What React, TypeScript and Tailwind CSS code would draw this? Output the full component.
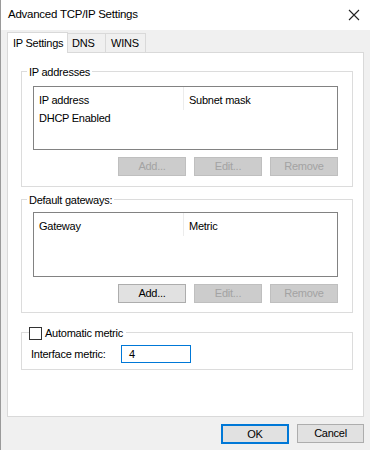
import React from "react";

const font = { fontFamily: '"Liberation Sans", Arial, sans-serif' };

function Btn({ label, disabled, isDefault, w = "w-[68px]" }: { label: string; disabled?: boolean; isDefault?: boolean; w?: string }) {
  if (disabled) {
    return (
      <div className={`${w} h-[19px] flex items-center justify-center bg-[#cccccc] border border-[#bfbfbf] text-[#a3a3a3]`}>
        {label}
      </div>
    );
  }
  if (isDefault) {
    return (
      <div className={`${w} h-[20px] flex items-center justify-center bg-[#e1e1e1] border-2 border-[#0078d7] text-black`}>
        {label}
      </div>
    );
  }
  return (
    <div className={`${w} h-[19px] flex items-center justify-center bg-[#e1e1e1] border border-[#adadad] text-black`}>
      {label}
    </div>
  );
}

function ListBox({ h, col1, col2, rows }: { h: string; col1: string; col2: string; rows: string[] }) {
  return (
    <div className={`ml-[11px] w-[305px] ${h} border border-[#828282] bg-white`}>
      <div className="flex h-[23px]">
        <div className="w-[150px] pl-[5px] pt-[5px] border-r border-[#ececec]">{col1}</div>
        <div className="pl-[5px] pt-[5px]">{col2}</div>
      </div>
      {rows.map((r) => (
        <div key={r} className="pl-[5px] leading-[14px] pt-[1px]">{r}</div>
      ))}
    </div>
  );
}

export default function App() {
  return (
    <div
      className="w-[370px] h-[450px] bg-[#f0f0f0] flex flex-col text-[11px] tracking-[-0.25px] text-black border-l border-[#9a9a9a] overflow-hidden"
      style={font}
    >
      {/* Title bar */}
      <div className="h-[30px] bg-white flex items-center justify-between pl-[7px] pr-[9px] shrink-0">
        <span className="text-[11.5px] text-black">Advanced TCP/IP Settings</span>
        <svg width="12" height="12" viewBox="0 0 12 12" className="mr-[1px]">
          <path d="M1 1 L11 11 M11 1 L1 11" stroke="#222" strokeWidth="1.1" />
        </svg>
      </div>

      <div className="pl-[6px] pr-[6px]">
        {/* Tabs */}
        <div className="flex items-end h-[22px] mt-[0px] relative z-10">
          <div className="h-[21px] w-[61px] bg-white border border-b-0 border-[#d9d9d9] flex items-center pl-[5px] -mb-[1px]">
            IP Settings
          </div>
          <div className="h-[19px] w-[38px] bg-[#f0f0f0] border border-l-0 border-b-0 border-[#d9d9d9] flex items-center pl-[4px]">
            DNS
          </div>
          <div className="h-[19px] w-[40px] bg-[#f0f0f0] border border-l-0 border-b-0 border-[#d9d9d9] flex items-center pl-[5px]">
            WINS
          </div>
        </div>

        {/* Panel */}
        <div className="h-[365px] bg-white border border-[#d9d9d9] pt-[18px]">
          {/* Group 1 */}
          <div className="relative ml-[13px] w-[332px] border border-[#dcdcdc] pt-[14px] pb-[10px]">
            <span className="absolute -top-[8px] left-[5px] px-[2px] bg-white leading-[16px]">IP addresses</span>
            <ListBox h="h-[64px]" col1="IP address" col2="Subnet mask" rows={["DHCP Enabled"]} />
            <div className="flex justify-end gap-[8px] pr-[14px] mt-[7px]">
              <Btn label="Add..." disabled />
              <Btn label="Edit..." disabled />
              <Btn label="Remove" disabled />
            </div>
          </div>

          {/* Group 2 */}
          <div className="relative ml-[13px] w-[332px] border border-[#dcdcdc] pt-[12px] pb-[9px] mt-[12px]">
            <span className="absolute -top-[8px] left-[5px] px-[2px] bg-white leading-[16px]">Default gateways:</span>
            <ListBox h="h-[65px]" col1="Gateway" col2="Metric" rows={[]} />
            <div className="flex justify-end gap-[8px] pr-[14px] mt-[7px]">
              <Btn label="Add..." />
              <Btn label="Edit..." disabled />
              <Btn label="Remove" disabled />
            </div>
          </div>

          {/* Group 3 */}
          <div className="relative ml-[13px] w-[332px] border border-[#dcdcdc] pt-[12px] pb-[6px] mt-[19px]">
            <div className="absolute -top-[7px] left-[7px] flex items-center bg-white pr-[3px]">
              <div className="w-[13px] h-[13px] border border-[#333] bg-white" />
              <span className="ml-[3px] leading-[14px]">Automatic metric</span>
            </div>
            <div className="flex items-center pl-[9px]">
              <span className="w-[90px]">Interface metric:</span>
              <div className="w-[70px] h-[18px] border border-[#0078d7] flex items-center pl-[7px]">4</div>
            </div>
          </div>
        </div>

        {/* Bottom buttons */}
        <div className="flex justify-end gap-[8px] mt-[7px] pr-[0px]">
          <Btn label="OK" isDefault />
          <Btn label="Cancel" w="w-[67px]" />
        </div>
      </div>
    </div>
  );
}
